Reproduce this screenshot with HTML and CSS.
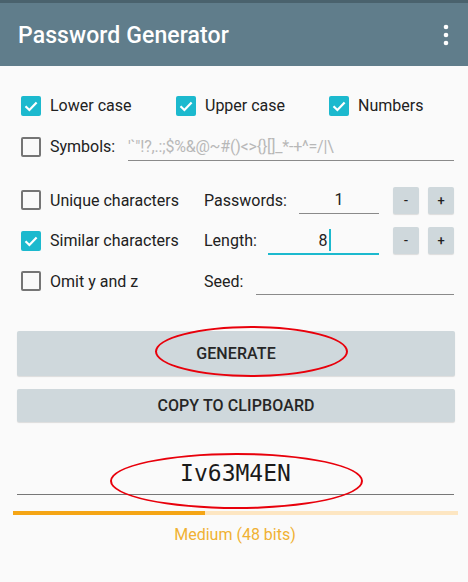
FILE: index.html
```html
<!DOCTYPE html>
<html>
<head>
<meta charset="utf-8">
<link rel="stylesheet" href="styles.css">
</head>
<body>
<div class="app">
  <header class="bar">
    <div class="title">Password Generator</div>
    <svg class="menu" width="6" height="22" viewBox="0 0 6 22"><circle cx="3" cy="3" r="2.3" fill="#fff"/><circle cx="3" cy="11" r="2.3" fill="#fff"/><circle cx="3" cy="19" r="2.3" fill="#fff"/></svg>
  </header>

  <section class="opts">
    <div class="row r1">
      <div class="cell w155"><span class="cb on"><svg viewBox="0 0 20 20"><path d="M4.5 10.2 L8.4 14 L15.6 6.4" fill="none" stroke="#fff" stroke-width="2.2"/></svg></span><span class="lbl">Lower case</span></div>
      <div class="cell w153"><span class="cb on"><svg viewBox="0 0 20 20"><path d="M4.5 10.2 L8.4 14 L15.6 6.4" fill="none" stroke="#fff" stroke-width="2.2"/></svg></span><span class="lbl">Upper case</span></div>
      <div class="cell"><span class="cb on"><svg viewBox="0 0 20 20"><path d="M4.5 10.2 L8.4 14 L15.6 6.4" fill="none" stroke="#fff" stroke-width="2.2"/></svg></span><span class="lbl">Numbers</span></div>
    </div>
    <div class="row r2">
      <div class="cell"><span class="cb"></span><span class="lbl sym">Symbols:</span></div>
      <div class="field symf"><span class="ph">'`"!?,.:;$%&amp;@~#()&lt;&gt;{}[]_*-+^=/|\</span></div>
    </div>

    <div class="row r3">
      <div class="cell w183"><span class="cb"></span><span class="lbl">Unique characters</span></div>
      <span class="lbl w95">Passwords:</span>
      <div class="field num"><span class="val">1</span></div>
      <div class="btns"><span class="sb">-</span><span class="sb">+</span></div>
    </div>
    <div class="row r4">
      <div class="cell w183"><span class="cb on"><svg viewBox="0 0 20 20"><path d="M4.5 10.2 L8.4 14 L15.6 6.4" fill="none" stroke="#fff" stroke-width="2.2"/></svg></span><span class="lbl">Similar characters</span></div>
      <span class="lbl w64">Length:</span>
      <div class="field num len"><span class="val">8<i class="caret"></i></span></div>
      <div class="btns"><span class="sb">-</span><span class="sb">+</span></div>
    </div>
    <div class="row r5">
      <div class="cell w183"><span class="cb"></span><span class="lbl">Omit y and z</span></div>
      <span class="lbl w52">Seed:</span>
      <div class="field seed"></div>
    </div>
  </section>

  <section class="actions">
    <div class="btn gen">GENERATE<span class="ring ring1"></span></div>
    <div class="btn copy">COPY TO CLIPBOARD</div>
  </section>

  <section class="out">
    <div class="pw">Iv63M4EN<span class="ring ring2"></span></div>
    <div class="meter"><div class="fill" style="width:192px"></div></div>
    <div class="strength">Medium (48 bits)</div>
  </section>
</div>
</body>
</html>
```

FILE: styles.css
```css
* { box-sizing: border-box; }
html, body { margin: 0; padding: 0; }
body {
  width: 468px;
  height: 582px;
  background: #fafafa;
  font-family: Roboto, "Noto Sans", sans-serif;
  color: #212121;
  overflow: hidden;
}
.bar {
  height: 66px;
  background: #607d8b;
  border-top: 3px solid #4a626d;
  display: flex;
  align-items: center;
  justify-content: space-between;
  padding: 0 19px 0 18px;
}
.title {
  color: #fff;
  font-size: 23px;
  font-weight: 500;
  letter-spacing: 0.1px;
  padding-top: 1px;
}
.menu { display: block; margin-top: 1px; }

.opts { padding: 19px 14px 0 21px; }
.row { display: flex; align-items: center; }
.r1, .r2 { height: 41px; }
.r3 { margin-top: 13px; height: 40px; }
.r4 { height: 41px; }
.r5 { height: 40px; }

.cell { display: flex; align-items: center; }
.w155 { width: 155px; }
.w153 { width: 153px; }
.w183 { width: 183px; }
.w95 { width: 95px; }
.w64 { width: 64px; }
.w52 { width: 52px; }

.cb {
  width: 20px;
  height: 20px;
  border: 2px solid #757575;
  border-radius: 2px;
  margin-right: 9px;
  flex: none;
  display: flex;
}
.cb.on { background: #1cb9ce; border-color: #1cb9ce; border-width: 0; }
.cb svg { width: 20px; height: 20px; display: block; }

.lbl { font-size: 16px; color: #212121; white-space: nowrap; }
.sym { width: 78px; }

.field {
  height: 28px;
  align-self: center;
  border-bottom: 1.5px solid #8a8a8a;
  display: flex;
  align-items: center;
}
.symf { width: 326px; }
.ph { color: #b8b8b8; font-size: 16px; white-space: nowrap; letter-spacing: -0.2px; }
.num { width: 80px; justify-content: center; }
.len { width: 111px; border-bottom: 2px solid #1cb9ce; padding-left: 2px; }
.val { font-size: 16px; color: #212121; position: relative; }
.caret {
  display: inline-block;
  width: 2px;
  height: 22px;
  background: #1cb9ce;
  vertical-align: -5px;
  margin-left: 1px;
}
.seed { width: 198px; }

.btns { display: flex; gap: 9px; margin-left: 14px; }
.sb {
  width: 26px;
  height: 27px;
  background: #cfd8dc;
  border-radius: 2px;
  box-shadow: 0 1px 1px rgba(0,0,0,0.12);
  display: flex;
  align-items: center;
  justify-content: center;
  font-size: 13px;
  font-weight: 500;
  color: #222;
}

.actions { padding: 30px 13px 0 17px; display: flex; flex-direction: column; gap: 13px; }
.btn {
  position: relative;
  background: #cfd8dc;
  border-radius: 2px;
  box-shadow: 0 1px 1px rgba(0,0,0,0.12);
  display: flex;
  align-items: center;
  justify-content: center;
  font-size: 16px;
  font-weight: 500;
  color: #262626;
  letter-spacing: 0.1px;
}
.gen { height: 45px; }
.copy { height: 33px; }

.ring {
  position: absolute;
  border: 2.5px solid #e8000b;
  border-radius: 50%;
  pointer-events: none;
}
.ring1 { left: 138px; top: -5px; width: 193px; height: 51px; }

.pw {
  position: relative;
  margin: 18px 14px 0 17px;
  height: 55px;
  border-bottom: 1.5px solid #777;
  display: flex;
  align-items: center;
  justify-content: center;
  font-family: "DejaVu Sans Mono", "Liberation Mono", monospace;
  font-size: 23px;
  color: #1a1a1a;
  padding-top: 12px;
}
.ring2 { left: 93px; top: 13px; width: 253px; height: 56px; }

.meter {
  margin: 16px 10px 0 13px;
  height: 4px;
  background: #fde6c2;
}
.fill { height: 4px; background: #f5a515; }
.strength {
  text-align: center;
  font-size: 16px;
  color: #f0b133;
  margin-top: 10px;
  padding-left: 2px;
}
```
